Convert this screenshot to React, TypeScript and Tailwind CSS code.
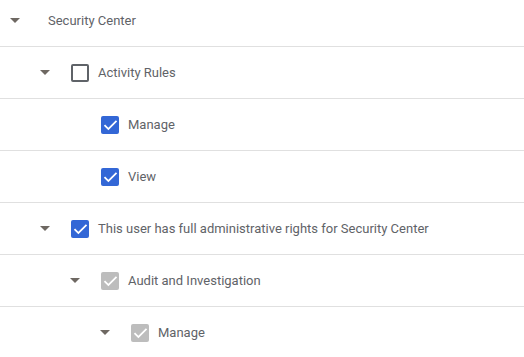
import React from 'react';

type Row = {
  label: string;
  level: number;
  caret: boolean;
  box: 'none' | 'empty' | 'checked' | 'disabled';
};

const rows: Row[] = [
  { label: 'Security Center', level: 0, caret: true, box: 'none' },
  { label: 'Activity Rules', level: 1, caret: true, box: 'empty' },
  { label: 'Manage', level: 2, caret: false, box: 'checked' },
  { label: 'View', level: 2, caret: false, box: 'checked' },
  { label: 'This user has full administrative rights for Security Center', level: 1, caret: true, box: 'checked' },
  { label: 'Audit and Investigation', level: 2, caret: true, box: 'disabled' },
  { label: 'Manage', level: 3, caret: true, box: 'disabled' },
];

const padByLevel = ['pl-0', 'pl-[30px]', 'pl-[60px]', 'pl-[90px]'];

function Caret() {
  return (
    <svg width="10" height="5" viewBox="0 0 10 5">
      <path d="M0 0L10 0L5 5Z" fill="#6e6862" />
    </svg>
  );
}

function Box({ kind }: { kind: Row['box'] }) {
  if (kind === 'empty') {
    return <div className="ml-[11px] h-[18px] w-[18px] rounded-[2px] border-2 border-[#5f6368]" />;
  }
  const bg = kind === 'checked' ? 'bg-[#3367d6]' : 'bg-[#bdbdbd]';
  return (
    <div className={`ml-[11px] flex h-[18px] w-[18px] items-center justify-center rounded-[2px] ${bg}`}>
      <svg width="17" height="17" viewBox="0 0 24 24">
        <path d="M9 16.6L4.4 12l-1.8 1.8L9 20.2 21.4 7.8 19.6 6z" fill="#ffffff" />
      </svg>
    </div>
  );
}

export default function App() {
  return (
    <div className="h-[357px] w-[524px] overflow-hidden bg-white font-['Roboto',sans-serif] text-[13px] text-[#5f6368]">
      <div className="-mt-[5px]">
        {rows.map((r, i) => (
          <div
            key={i}
            className={`flex h-[52px] items-center border-b border-[#e0e0e0] ${padByLevel[r.level]}`}
          >
            <div className="flex w-[30px] items-center justify-center">{r.caret && <Caret />}</div>
            {r.box === 'none' ? (
              <span className="ml-[18px]">{r.label}</span>
            ) : (
              <>
                <Box kind={r.box} />
                <span className="ml-[9px]">{r.label}</span>
              </>
            )}
          </div>
        ))}
      </div>
    </div>
  );
}
